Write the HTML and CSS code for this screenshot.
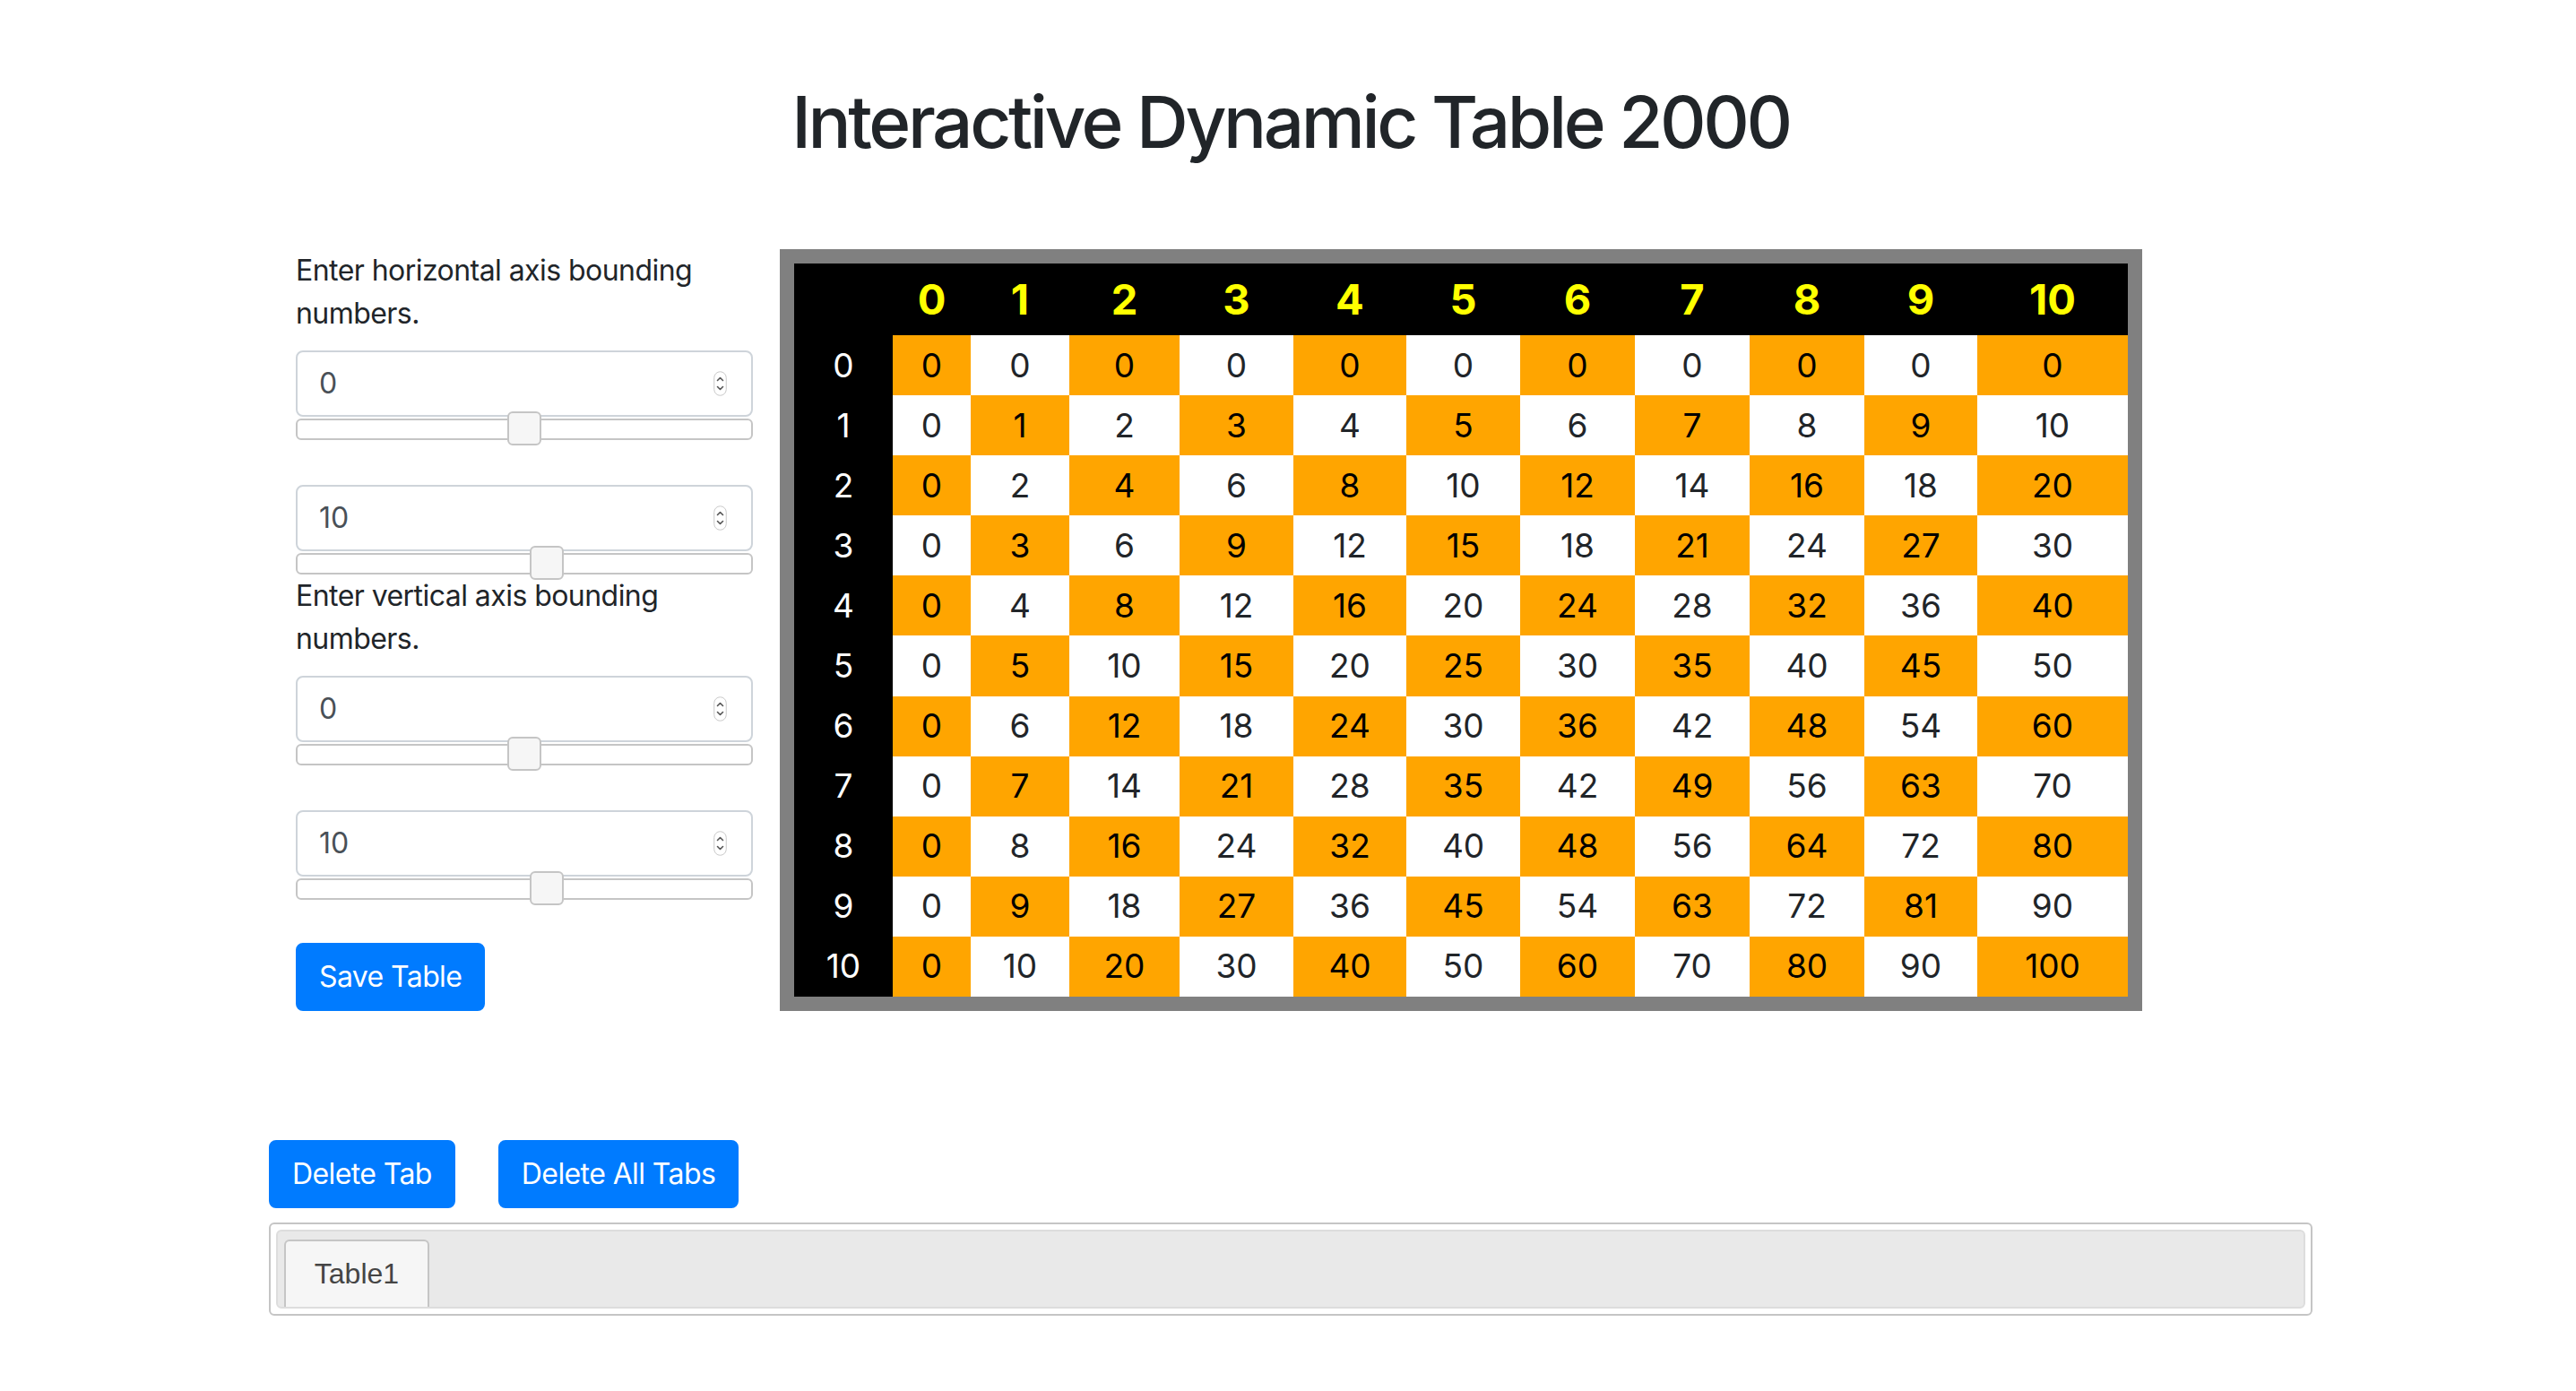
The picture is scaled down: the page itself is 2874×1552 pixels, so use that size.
FILE: index.html
```html
<!DOCTYPE html>
<html lang="en">
<head>
<meta charset="utf-8">
<title>Interactive Dynamic Table 2000</title>
<link rel="stylesheet" href="styles.css">
</head>
<body>
<div class="container">
  <h1 class="title">Interactive Dynamic Table 2000</h1>
  <div class="row">
    <div class="controls">
      <form class="form">
        <label class="label">Enter horizontal axis bounding numbers.</label>
        <div class="field">
          <input class="num" type="text" value="0">
          <svg class="spin" width="15" height="28" viewBox="0 0 15 28"><rect x="0.75" y="0.75" width="13.5" height="26.5" rx="6.75" fill="#fff" stroke="#c9c9c9" stroke-width="1"/><polyline points="4.5,10.5 7.5,7.5 10.5,10.5" fill="none" stroke="#555" stroke-width="1.6" stroke-linecap="round" stroke-linejoin="round"/><polyline points="4.5,17.5 7.5,20.5 10.5,17.5" fill="none" stroke="#555" stroke-width="1.6" stroke-linecap="round" stroke-linejoin="round"/></svg>
        </div>
        <div class="slider spaced"><span class="handle" style="left:50%"></span></div>
        <div class="field">
          <input class="num" type="text" value="10">
          <svg class="spin" width="15" height="28" viewBox="0 0 15 28"><rect x="0.75" y="0.75" width="13.5" height="26.5" rx="6.75" fill="#fff" stroke="#c9c9c9" stroke-width="1"/><polyline points="4.5,10.5 7.5,7.5 10.5,10.5" fill="none" stroke="#555" stroke-width="1.6" stroke-linecap="round" stroke-linejoin="round"/><polyline points="4.5,17.5 7.5,20.5 10.5,17.5" fill="none" stroke="#555" stroke-width="1.6" stroke-linecap="round" stroke-linejoin="round"/></svg>
        </div>
        <div class="slider"><span class="handle" style="left:55%"></span></div>
        <label class="label">Enter vertical axis bounding numbers.</label>
        <div class="field">
          <input class="num" type="text" value="0">
          <svg class="spin" width="15" height="28" viewBox="0 0 15 28"><rect x="0.75" y="0.75" width="13.5" height="26.5" rx="6.75" fill="#fff" stroke="#c9c9c9" stroke-width="1"/><polyline points="4.5,10.5 7.5,7.5 10.5,10.5" fill="none" stroke="#555" stroke-width="1.6" stroke-linecap="round" stroke-linejoin="round"/><polyline points="4.5,17.5 7.5,20.5 10.5,17.5" fill="none" stroke="#555" stroke-width="1.6" stroke-linecap="round" stroke-linejoin="round"/></svg>
        </div>
        <div class="slider spaced"><span class="handle" style="left:50%"></span></div>
        <div class="field">
          <input class="num" type="text" value="10">
          <svg class="spin" width="15" height="28" viewBox="0 0 15 28"><rect x="0.75" y="0.75" width="13.5" height="26.5" rx="6.75" fill="#fff" stroke="#c9c9c9" stroke-width="1"/><polyline points="4.5,10.5 7.5,7.5 10.5,10.5" fill="none" stroke="#555" stroke-width="1.6" stroke-linecap="round" stroke-linejoin="round"/><polyline points="4.5,17.5 7.5,20.5 10.5,17.5" fill="none" stroke="#555" stroke-width="1.6" stroke-linecap="round" stroke-linejoin="round"/></svg>
        </div>
        <div class="slider last"><span class="handle" style="left:55%"></span></div>
        <button type="button" class="btn">Save Table</button>
      </form>
    </div>
    <div class="table-col">
      <table class="mult">
        <colgroup>
          <col class="w-h"><col class="w0"><col class="w1"><col class="w2"><col class="w3"><col class="w4"><col class="w5"><col class="w6"><col class="w7"><col class="w8"><col class="w9"><col class="w10">
        </colgroup>
        <thead>
          <tr class="head"><th class="corner"></th><th>0</th><th>1</th><th>2</th><th>3</th><th>4</th><th>5</th><th>6</th><th>7</th><th>8</th><th>9</th><th>10</th></tr>
        </thead>
        <tbody>
          <tr><th>0</th><td class="o">0</td><td>0</td><td class="o">0</td><td>0</td><td class="o">0</td><td>0</td><td class="o">0</td><td>0</td><td class="o">0</td><td>0</td><td class="o">0</td></tr>
          <tr><th>1</th><td>0</td><td class="o">1</td><td>2</td><td class="o">3</td><td>4</td><td class="o">5</td><td>6</td><td class="o">7</td><td>8</td><td class="o">9</td><td>10</td></tr>
          <tr><th>2</th><td class="o">0</td><td>2</td><td class="o">4</td><td>6</td><td class="o">8</td><td>10</td><td class="o">12</td><td>14</td><td class="o">16</td><td>18</td><td class="o">20</td></tr>
          <tr><th>3</th><td>0</td><td class="o">3</td><td>6</td><td class="o">9</td><td>12</td><td class="o">15</td><td>18</td><td class="o">21</td><td>24</td><td class="o">27</td><td>30</td></tr>
          <tr><th>4</th><td class="o">0</td><td>4</td><td class="o">8</td><td>12</td><td class="o">16</td><td>20</td><td class="o">24</td><td>28</td><td class="o">32</td><td>36</td><td class="o">40</td></tr>
          <tr><th>5</th><td>0</td><td class="o">5</td><td>10</td><td class="o">15</td><td>20</td><td class="o">25</td><td>30</td><td class="o">35</td><td>40</td><td class="o">45</td><td>50</td></tr>
          <tr><th>6</th><td class="o">0</td><td>6</td><td class="o">12</td><td>18</td><td class="o">24</td><td>30</td><td class="o">36</td><td>42</td><td class="o">48</td><td>54</td><td class="o">60</td></tr>
          <tr><th>7</th><td>0</td><td class="o">7</td><td>14</td><td class="o">21</td><td>28</td><td class="o">35</td><td>42</td><td class="o">49</td><td>56</td><td class="o">63</td><td>70</td></tr>
          <tr><th>8</th><td class="o">0</td><td>8</td><td class="o">16</td><td>24</td><td class="o">32</td><td>40</td><td class="o">48</td><td>56</td><td class="o">64</td><td>72</td><td class="o">80</td></tr>
          <tr><th>9</th><td>0</td><td class="o">9</td><td>18</td><td class="o">27</td><td>36</td><td class="o">45</td><td>54</td><td class="o">63</td><td>72</td><td class="o">81</td><td>90</td></tr>
          <tr><th>10</th><td class="o">0</td><td>10</td><td class="o">20</td><td>30</td><td class="o">40</td><td>50</td><td class="o">60</td><td>70</td><td class="o">80</td><td>90</td><td class="o">100</td></tr>
        </tbody>
      </table>
    </div>
  </div>
  <div class="tab-actions">
    <button type="button" class="btn">Delete Tab</button>
    <button type="button" class="btn">Delete All Tabs</button>
  </div>
  <div class="tabs">
    <ul class="tabs-nav">
      <li class="tab"><a class="tab-link" href="#table1">Table1</a></li>
    </ul>
  </div>
</div>
</body>
</html>
```
FILE: styles.css
```css
* { box-sizing: border-box; }

html, body {
  margin: 0;
  padding: 0;
  background: #fff;
}

body {
  font-family: Inter, "Liberation Sans", Arial, sans-serif;
  font-size: 32px;
  line-height: 48px;
  color: #212529;
}

.container {
  width: 2280px;
  margin-left: 300px;
}

.title {
  margin: 88px 0 94px;
  font-size: 80px;
  line-height: 96px;
  font-weight: 500;
  text-align: center;
  letter-spacing: -3.4px;
}

.row {
  display: flex;
  align-items: flex-start;
}

.controls {
  width: 570px;
  padding: 0 30px;
}

.form {
  display: flex;
  flex-direction: column;
  align-items: stretch;
}

.label {
  display: block;
  margin-bottom: 17px;
  letter-spacing: -0.55px;
}

.field {
  display: flex;
  align-items: center;
  height: 74px;
  padding: 0 27px 0 24px;
  border: 2px solid #ced4da;
  border-radius: 8px;
  background: #fff;
}

.num {
  flex: 1;
  min-width: 0;
  border: 0;
  padding: 0;
  margin: 0;
  outline: none;
  background: transparent;
  font-family: inherit;
  font-size: 32px;
  line-height: 48px;
  color: #495057;
}

.spin { display: block; flex: none; }

.slider {
  position: relative;
  height: 24px;
  margin-top: 2px;
  border: 2px solid #c5c5c5;
  border-radius: 6px;
  background: #fff;
}

.slider.spaced { margin-bottom: 50px; }
.slider.last { margin-bottom: 48px; }

.handle {
  position: absolute;
  top: -10px;
  width: 38px;
  height: 38px;
  margin-left: -19px;
  background: #f6f6f6;
  border: 2px solid #c5c5c5;
  border-radius: 6px;
  z-index: 2;
}

.btn {
  display: inline-block;
  height: 76px;
  padding: 12px 24px;
  border: 2px solid #007bff;
  border-radius: 8px;
  background: #007bff;
  color: #fff;
  font-family: inherit;
  font-size: 32px;
  line-height: 48px;
  letter-spacing: -0.6px;
  cursor: pointer;
}

.form .btn { align-self: flex-start; }

.table-col { flex: none; }

.mult {
  table-layout: fixed;
  width: 1520px;
  border: 16px solid #808080;
  border-spacing: 0;
  border-collapse: separate;
  background: #000;
}

.w-h { width: 110px; }
.w0 { width: 87px; }
.w1 { width: 110px; }
.w2 { width: 123px; }
.w3 { width: 127px; }
.w4 { width: 126px; }
.w5 { width: 127px; }
.w6 { width: 128px; }
.w7 { width: 128px; }
.w8 { width: 128px; }
.w9 { width: 126px; }
.w10 { width: 168px; }

.mult th,
.mult td {
  padding: 0;
  text-align: center;
  vertical-align: middle;
}

.mult tbody tr { height: 67.1px; }
.mult .head { height: 80px; }

.mult .head th {
  color: #ffff00;
  font-size: 47px;
  font-weight: 700;
  line-height: 56px;
}

.mult tbody th {
  color: #fff;
  font-weight: 400;
  font-size: 37px;
  line-height: 44px;
}

.mult td {
  background: #fff;
  color: #212529;
  font-size: 37px;
  line-height: 44px;
}

.mult td.o {
  background: #ffa500;
  color: #000;
}

.tab-actions {
  display: flex;
  gap: 48px;
  margin-top: 144px;
}

.tabs {
  margin-top: 16px;
  padding: 6.4px;
  border: 2px solid #c5c5c5;
  border-radius: 6px;
  background: #fff;
}

.tabs-nav {
  display: flex;
  margin: 0;
  padding: 6.4px 6.4px 0;
  list-style: none;
  border: 2px solid #ddd;
  border-radius: 6px;
  background: #e9e9e9;
}

.tab {
  margin: 2px 6.4px 0 0;
  border: 2px solid #c5c5c5;
  border-bottom: 0;
  border-radius: 6px 6px 0 0;
  background: #f6f6f6;
}

.tab-link {
  display: block;
  padding: 16px 32px;
  font-family: "Liberation Sans", Arial, sans-serif;
  font-size: 32px;
  line-height: 41px;
  color: #454545;
  text-decoration: none;
}
```
